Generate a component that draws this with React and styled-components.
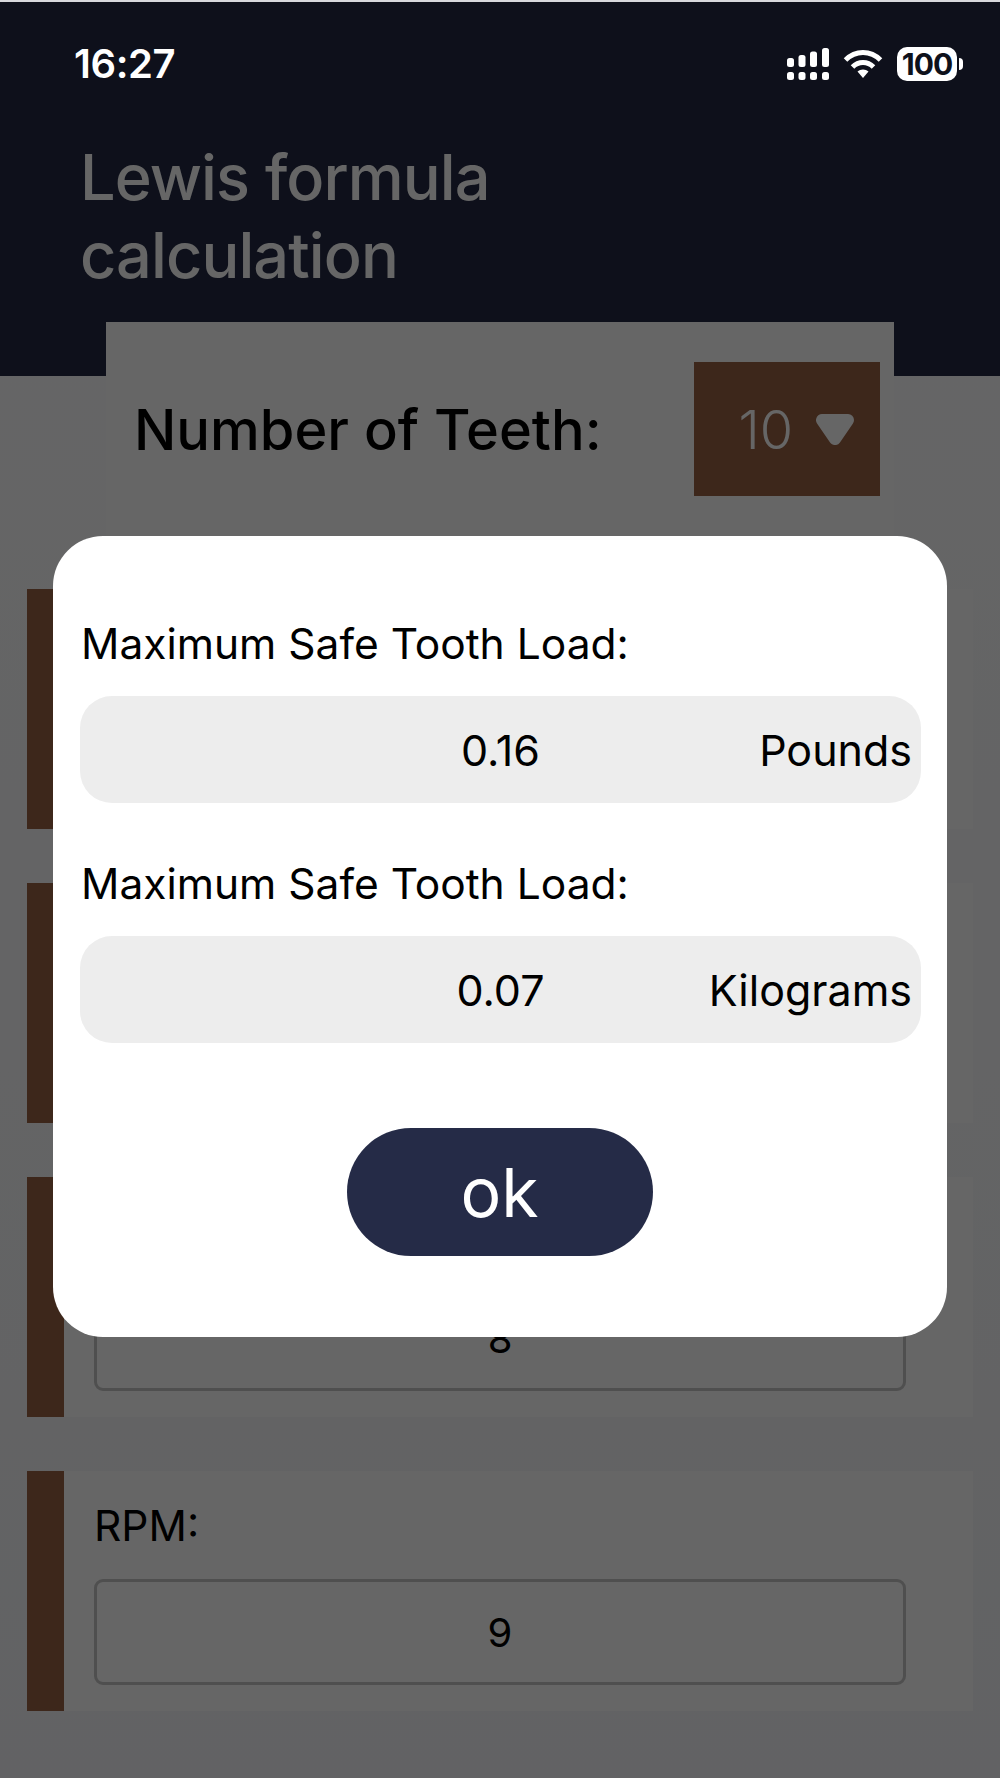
import styled, { createGlobalStyle } from "styled-components"

const GlobalStyle = createGlobalStyle`
  html, body {
    margin: 0;
    padding: 0;
  }
  body {
    font-family: Inter, "Noto Sans", "Liberation Sans", sans-serif;
    color: #000;
  }
  * {
    box-sizing: border-box;
  }
`

// only the last label and the last two values show past the modal
const fields = [
  { id: "first" },
  { id: "second" },
  { id: "third", value: "8" },
  { id: "rpm", label: "RPM:", value: "9" },
]

const results = [
  { value: "0.16", unit: "Pounds" },
  { value: "0.07", unit: "Kilograms" },
]

const SignalIcon = () => (
  <svg width="42" height="32" viewBox="0 0 42 32" fill="#fff">
    <rect x="0" y="24" width="7" height="8" rx="2.5" />
    <rect x="11.5" y="24" width="7" height="8" rx="2.5" />
    <rect x="23" y="24" width="7" height="8" rx="2.5" />
    <rect x="35" y="24" width="7" height="8" rx="2.5" />
    <rect x="0" y="10" width="7" height="9" rx="2.5" />
    <rect x="11.5" y="7" width="7" height="12" rx="2.5" />
    <rect x="23" y="3.5" width="7" height="15.5" rx="2.5" />
    <rect x="35" y="0" width="7" height="19" rx="2.5" />
  </svg>
)

const WifiIcon = () => (
  <svg width="40" height="30" viewBox="0 0 40 30" fill="none" stroke="#fff" strokeWidth="5">
    <path d="M2.5 11C12.5 1 27.5 1 37.5 11" />
    <path d="M9.5 18C15.5 12 24.5 12 30.5 18" />
    <path d="M14.5 22.5C17.5 19.8 22.5 19.8 25.5 22.5L20 29Z" fill="#fff" stroke="none" />
  </svg>
)

const CaretIcon = () => (
  <svg width="38" height="31" viewBox="0 0 38 31" fill="#fff" stroke="#fff" strokeWidth="12" strokeLinejoin="round">
    <path d="M6 6H32L19 25Z" />
  </svg>
)

export default function App() {
  return (
    <Page>
      <GlobalStyle />
      <Header>
        <StatusBar>
          <Clock>16:27</Clock>
          <StatusIcons>
            <SignalIcon />
            <WifiIcon />
            <Battery>
              <BatteryBody>100</BatteryBody>
              <BatteryNub />
            </Battery>
          </StatusIcons>
        </StatusBar>
        <Title>Lewis formula calculation</Title>
      </Header>

      <TeethCard>
        <TeethLabel>Number of Teeth:</TeethLabel>
        <Dropdown>
          <span>10</span>
          <CaretIcon />
        </Dropdown>
      </TeethCard>

      <Fields>
        {fields.map((field) => (
          <FieldRow key={field.id}>
            <FieldLabel>{field.label}</FieldLabel>
            <FieldInput>{field.value}</FieldInput>
          </FieldRow>
        ))}
      </Fields>

      <Overlay>
        <Modal>
          {results.map((result) => (
            <div key={result.unit}>
              <ResultLabel>Maximum Safe Tooth Load:</ResultLabel>
              <ResultBox>
                <span />
                <ResultValue>{result.value}</ResultValue>
                <ResultUnit>{result.unit}</ResultUnit>
              </ResultBox>
            </div>
          ))}
          <OkButton>ok</OkButton>
        </Modal>
      </Overlay>
    </Page>
  )
}

const Page = styled.div`
  position: relative;
  width: 1000px;
  height: 1778px;
  overflow: hidden;
  border-top: 2px solid #d8d8dc;
  background: linear-gradient(#ffffff, #f5f6fa);
`
const Header = styled.header`
  height: 374px;
  padding: 0 74px;
  background: #232a44;
`
const StatusBar = styled.div`
  position: relative;
  z-index: 2;
  display: flex;
  align-items: center;
  justify-content: space-between;
  height: 124px;
  margin-right: -37px;
  color: #fff;
`
const Clock = styled.span`
  margin-top: -2px;
  font-size: 40px;
  font-weight: 600;
  letter-spacing: -0.4px;
`
const StatusIcons = styled.div`
  display: flex;
  align-items: center;
  gap: 14px;
`
const Battery = styled.div`
  display: flex;
  align-items: center;
  gap: 2px;
`
const BatteryBody = styled.div`
  width: 60px;
  height: 34px;
  border-radius: 10px;
  background: #fff;
  color: #0e111b;
  font-size: 30px;
  font-weight: 700;
  line-height: 34px;
  text-align: center;
  letter-spacing: -1px;
`
const BatteryNub = styled.div`
  width: 4px;
  height: 12px;
  border-radius: 0 4px 4px 0;
  background: #fff;
`
const Title = styled.h1`
  width: 460px;
  margin: 12px 0 0 6px;
  color: #fff;
  font-size: 63px;
  font-weight: 500;
  line-height: 78px;
  letter-spacing: -0.9px;
`
const TeethCard = styled.section`
  display: flex;
  align-items: center;
  justify-content: space-between;
  width: 788px;
  height: 214px;
  margin: -54px 0 0 106px;
  padding: 0 14px 0 28px;
  position: relative;
  background: #fff;
`
const TeethLabel = styled.div`
  padding-top: 2px;
  font-size: 56px;
  font-weight: 500;
`
const Dropdown = styled.div`
  display: flex;
  align-items: center;
  justify-content: flex-end;
  gap: 23px;
  width: 186px;
  height: 134px;
  padding-right: 26px;
  background: #9a6244;
  color: #fff;
  font-size: 54px;
  font-weight: 300;
`
const Fields = styled.div`
  display: flex;
  flex-direction: column;
  gap: 54px;
  margin: 53px 27px 0;
`
const FieldRow = styled.div`
  width: 946px;
  height: 240px;
  padding-left: 30px;
  border-left: 37px solid #9a6244;
  background: #fff;
`
const FieldLabel = styled.div`
  height: 108px;
  padding-top: 30px;
  font-size: 42.5px;
  line-height: 50px;
`
const FieldInput = styled.div`
  display: flex;
  align-items: center;
  justify-content: center;
  width: 812px;
  height: 106px;
  border: 3px solid #c6c6c6;
  border-radius: 9px;
  font-size: 40px;
`
const Overlay = styled.div`
  position: absolute;
  inset: 0;
  z-index: 1;
  padding: 534px 53px 0;
  background: rgba(0, 0, 0, 0.6);
`
const Modal = styled.div`
  display: flex;
  flex-direction: column;
  align-items: stretch;
  height: 801px;
  padding: 77px 26px 0 27px;
  border-radius: 50px;
  background: #fff;
`
const ResultLabel = styled.div`
  height: 60px;
  padding: 1px 0 0 1px;
  font-size: 42.5px;
  line-height: 60px;
`
const ResultBox = styled.div`
  display: grid;
  grid-template-columns: 1fr auto 1fr;
  align-items: center;
  height: 107px;
  margin: 23px 0 50px;
  padding: 0 9px;
  border-radius: 32px;
  background: #ededed;
  font-size: 43px;
`
const ResultValue = styled.span`
  text-align: center;
`
const ResultUnit = styled.span`
  justify-self: end;
`
const OkButton = styled.button`
  align-self: center;
  width: 306px;
  height: 128px;
  margin: 35px 2px 0 0;
  border: 0;
  border-radius: 64px;
  background: #252b47;
  color: #fff;
  font-family: inherit;
  font-size: 68px;
`
